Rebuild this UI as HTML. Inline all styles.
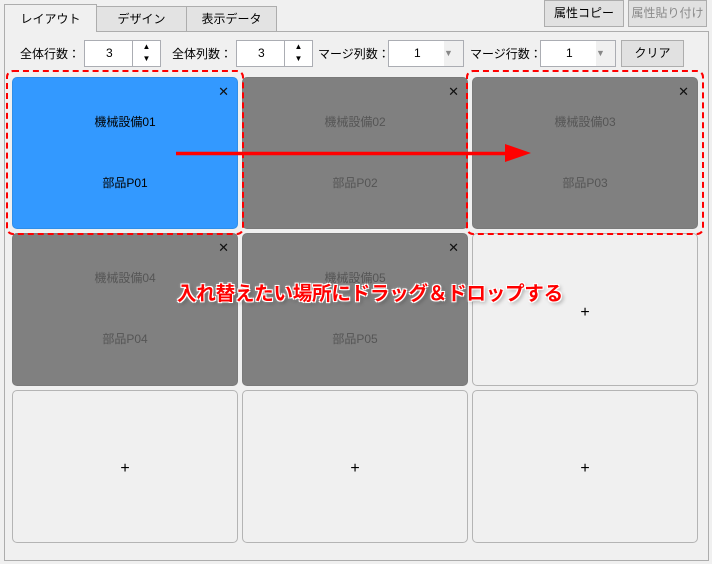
<!DOCTYPE html><html><head><meta charset="utf-8"><style>
*{box-sizing:border-box;margin:0;padding:0}
body{width:712px;height:564px;background:#f0f0f0;font-family:"Liberation Sans","Noto Sans CJK JP",sans-serif;font-size:12px;color:#000;position:relative;overflow:hidden}
.a{position:absolute}
.tab{position:absolute;top:6px;height:26px;border:1px solid #adadad;background:#e3e3e3;text-align:center;line-height:24px}
.btn{position:absolute;border:1px solid #adadad;background:#e1e1e1;text-align:center}
.in{position:absolute;background:#fff;border:1px solid #abadb3;text-align:center;line-height:25px}
.cell{position:absolute;width:226px;border-radius:5px;text-align:center}
.g{background:#808080;color:#555;border:1px solid #7a7a7a}
.e{background:#f0f0f0;border:1px solid #b4b4b4}
.t1{position:absolute;left:0;right:0;top:35px}
.t2{position:absolute;left:0;right:0;top:96px}
.x{position:absolute;right:8px;top:6px;font-size:13px;color:#111}
.p{position:absolute;left:0;right:0;text-align:center;font-size:16px}
.dash{position:absolute;border:2px dashed #f00;border-radius:7px}
</style></head><body>
<div class="a" style="left:4px;top:31px;width:705px;height:530px;border:1px solid #adadad"></div>
<div class="tab" style="left:4px;width:93px;top:4px;height:28px;background:#f0f0f0;border-bottom:none;line-height:28px">レイアウト</div>
<div class="tab" style="left:96px;width:91px">デザイン</div>
<div class="tab" style="left:186px;width:91px">表示データ</div>
<div class="btn" style="left:544px;top:0;width:80px;height:27px;line-height:25px">属性コピー</div>
<div class="btn" style="left:628px;top:0;width:79px;height:27px;line-height:25px;color:#8a8a8a">属性貼り付け</div>
<div class="a" style="left:20px;top:45px">全体行数：</div>
<div class="in" style="left:84px;top:40px;width:77px;height:27px;text-align:left;padding-left:21px">3</div>
<div class="a" style="left:132px;top:40px;width:29px;height:27px;border:1px solid #abadb3;background:#fff;font-size:8px;text-align:center;line-height:12px">▲<br>▼</div>
<div class="a" style="left:172px;top:45px">全体列数：</div>
<div class="in" style="left:236px;top:40px;width:77px;height:27px;text-align:left;padding-left:21px">3</div>
<div class="a" style="left:284px;top:40px;width:29px;height:27px;border:1px solid #abadb3;background:#fff;font-size:8px;text-align:center;line-height:12px">▲<br>▼</div>
<div class="a" style="left:318px;top:45px">マージ列数：</div>
<div class="in" style="left:388px;top:40px;width:76px;height:27px;text-align:left;padding-left:25px">1<span style="position:absolute;right:0;top:0;width:19px;height:25px;background:#f0f0f0;color:#888;font-size:9px">▼</span></div>
<div class="a" style="left:470px;top:45px">マージ行数：</div>
<div class="in" style="left:540px;top:40px;width:76px;height:27px;text-align:left;padding-left:25px">1<span style="position:absolute;right:0;top:0;width:19px;height:25px;background:#f0f0f0;color:#888;font-size:9px">▼</span></div>
<div class="btn" style="left:621px;top:40px;width:63px;height:27px;line-height:25px">クリア</div>

<div class="cell" style="left:12px;top:77px;height:152px;background:#3399ff;border:1px solid #2f8ee8"><span class="x">✕</span><div class="t1">機械設備01</div><div class="t2">部品P01</div></div>
<div class="cell g" style="left:242px;top:77px;height:152px"><span class="x">✕</span><div class="t1">機械設備02</div><div class="t2">部品P02</div></div>
<div class="cell g" style="left:472px;top:77px;height:152px"><span class="x">✕</span><div class="t1">機械設備03</div><div class="t2">部品P03</div></div>
<div class="cell g" style="left:12px;top:233px;height:153px"><span class="x">✕</span><div class="t1">機械設備04</div><div class="t2">部品P04</div></div>
<div class="cell g" style="left:242px;top:233px;height:153px"><span class="x">✕</span><div class="t1">機械設備05</div><div class="t2">部品P05</div></div>
<div class="cell e" style="left:472px;top:233px;height:153px"><div class="p" style="top:70px">+</div></div>
<div class="cell e" style="left:12px;top:390px;height:153px"><div class="p" style="top:69px">+</div></div>
<div class="cell e" style="left:242px;top:390px;height:153px"><div class="p" style="top:69px">+</div></div>
<div class="cell e" style="left:472px;top:390px;height:153px"><div class="p" style="top:69px">+</div></div>

<div class="dash" style="left:6px;top:70px;width:238px;height:165px"></div>
<div class="dash" style="left:466px;top:70px;width:238px;height:165px"></div>
<svg class="a" style="left:0;top:0" width="712" height="564"><path d="M176 153.5H508" stroke="#f00" stroke-width="3.5"/><path d="M505 144L531 153L505 162Z" fill="#f00"/></svg>
<div class="a" style="left:177px;top:277px;font-size:19.6px;font-weight:bold;color:#f00;letter-spacing:-0.3px;text-shadow:-1px -1px 0 #fff,1px -1px 0 #fff,-1px 1px 0 #fff,1px 1px 0 #fff,0 0 3px #fff,2px 2px 4px rgba(0,0,0,.4)">入れ替えたい場所にドラッグ＆ドロップする</div>
</body></html>
